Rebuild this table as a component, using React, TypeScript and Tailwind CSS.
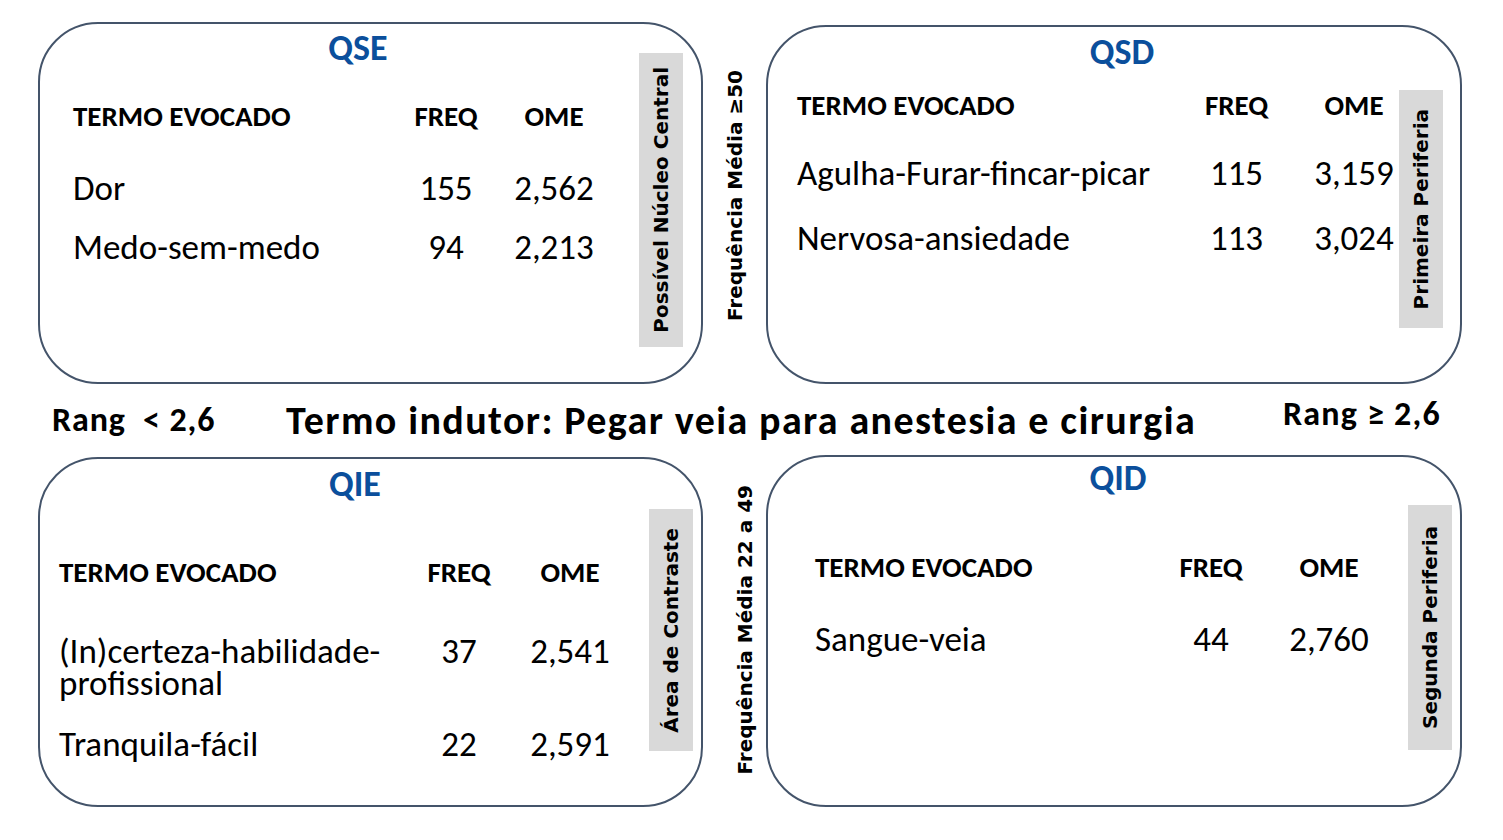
import type { ReactNode } from "react";

const body = "font-['Carlito','Lato',sans-serif]";
const verdana = "font-['DejaVu_Sans','Verdana',sans-serif]";

type Row = { term: ReactNode; freq: string; ome: string };

type TableProps = {
  rows: Row[];
  termWidth: string;
  omeGap: string;
  headerClass: string;
  rowClasses: string[];
};

function EvocTable({ rows, termWidth, omeGap, headerClass, rowClasses }: TableProps) {
  return (
    <div className={`${body} text-black`}>
      <div className={`flex items-center font-bold text-[29px] leading-[34px] ${headerClass}`}>
        <div className={termWidth}>TERMO EVOCADO</div>
        <div className="w-[70px] text-center">FREQ</div>
        <div className={`w-[90px] text-center ${omeGap}`}>OME</div>
      </div>
      {rows.map((row, i) => (
        <div key={i} className={`flex items-start text-[35px] leading-[32px] ${rowClasses[i]}`}>
          <div className={termWidth}>{row.term}</div>
          <div className="w-[70px] text-center">{row.freq}</div>
          <div className={`w-[90px] text-center ${omeGap}`}>{row.ome}</div>
        </div>
      ))}
    </div>
  );
}

function SideTag({ text, className }: { text: string; className: string }) {
  return (
    <div className={`flex w-[44px] shrink-0 items-center justify-center bg-[#d9d9d9] ${className}`}>
      <span className={`${verdana} rotate-180 whitespace-nowrap text-[20px] font-bold leading-none text-black [writing-mode:vertical-rl]`}>
        {text}
      </span>
    </div>
  );
}

function AxisLabel({ text, className }: { text: string; className: string }) {
  return (
    <div className={`flex w-[63px] shrink-0 justify-center ${className}`}>
      <span className={`${verdana} rotate-180 whitespace-nowrap text-[20px] font-bold leading-none text-black [writing-mode:vertical-rl]`}>
        {text}
      </span>
    </div>
  );
}

function Title({ text, className }: { text: string; className: string }) {
  return (
    <div className={`${body} text-center text-[36px] font-bold leading-[40px] text-[#0b4f9c] ${className}`}>
      {text}
    </div>
  );
}

export default function App() {
  return (
    <div className="h-[840px] w-[1503px] overflow-hidden bg-white">
      {/* top row */}
      <div className="flex h-[433px] items-start pl-[38px] pt-[22px]">
        <div className="flex h-[362px] w-[665px] shrink-0 rounded-[60px] border-2 border-[#44546a]">
          <div className="min-w-0 flex-1 pl-[33px]">
            <Title text="QSE" className="mt-[4px] w-[570px]" />
            <EvocTable
              termWidth="w-[338px] shrink-0"
              omeGap="ml-[28px] shrink-0"
              headerClass="mt-[31px]"
              rowClasses={["mt-[39px]", "mt-[27px]"]}
              rows={[
                { term: "Dor", freq: "155", ome: "2,562" },
                { term: "Medo-sem-medo", freq: "94", ome: "2,213" },
              ]}
            />
          </div>
          <SideTag text="Possível Núcleo Central" className="mr-[18px] mt-[29px] h-[294px]" />
        </div>

        <AxisLabel text="Frequência Média ≥50" className="mt-[48px]" />

        <div className="mt-[3px] flex h-[359px] w-[696px] shrink-0 rounded-[60px] border-2 border-[#44546a]">
          <div className="min-w-0 flex-1 pl-[29px]">
            <Title text="QSD" className="mt-[5px] w-[650px]" />
            <EvocTable
              termWidth="w-[405px] shrink-0"
              omeGap="ml-[38px] shrink-0"
              headerClass="mt-[16px]"
              rowClasses={["mt-[35px]", "mt-[33px]"]}
              rows={[
                { term: "Agulha-Furar-fincar-picar", freq: "115", ome: "3,159" },
                { term: "Nervosa-ansiedade", freq: "113", ome: "3,024" },
              ]}
            />
          </div>
          <SideTag text="Primeira Periferia" className="mr-[17px] mt-[63px] h-[238px]" />
        </div>
      </div>

      {/* middle row */}
      <div className={`${body} -mt-[49px] flex h-[71px] items-center font-bold text-black`}>
        <div className="ml-[52px] w-[234px] text-[34px] leading-none tracking-[0.9px]">Rang&nbsp; &lt; 2,6</div>
        <div className="w-[997px] pt-[2px] text-[40px] leading-none tracking-[1.4px]">
          Termo indutor: Pegar veia para anestesia e cirurgia
        </div>
        <div className="-mt-[12px] text-[34px] leading-none tracking-[1.2px]">Rang ≥ 2,6</div>
      </div>

      {/* bottom row */}
      <div className="flex items-start pl-[38px]">
        <div className="mt-[2px] flex h-[350px] w-[665px] shrink-0 rounded-[60px] border-2 border-[#44546a]">
          <div className="min-w-0 flex-1 pl-[19px]">
            <Title text="QIE" className="mt-[5px] w-[592px]" />
            <EvocTable
              termWidth="w-[365px] shrink-0"
              omeGap="ml-[31px] shrink-0"
              headerClass="mt-[51px]"
              rowClasses={["mt-[46px]", "mt-[29px]"]}
              rows={[
                {
                  term: (
                    <>
                      <span className="block">(In)certeza-habilidade-</span>
                      <span className="block">profissional</span>
                    </>
                  ),
                  freq: "37",
                  ome: "2,541",
                },
                { term: "Tranquila-fácil", freq: "22", ome: "2,591" },
              ]}
            />
          </div>
          <SideTag text="Área de Contraste" className="mr-[8px] mt-[50px] h-[242px]" />
        </div>

        <AxisLabel text="Frequência Média 22 a 49" className="mt-[30px] pl-[20px]" />

        <div className="flex h-[352px] w-[696px] shrink-0 rounded-[60px] border-2 border-[#44546a]">
          <div className="min-w-0 flex-1 pl-[47px]">
            <Title text="QID" className="mt-[1px] w-[606px]" />
            <EvocTable
              termWidth="w-[361px] shrink-0"
              omeGap="ml-[38px] shrink-0"
              headerClass="mt-[52px]"
              rowClasses={["mt-[39px]"]}
              rows={[{ term: "Sangue-veia", freq: "44", ome: "2,760" }]}
            />
          </div>
          <SideTag text="Segunda Periferia" className="mr-[8px] mt-[48px] h-[245px]" />
        </div>
      </div>
    </div>
  );
}
